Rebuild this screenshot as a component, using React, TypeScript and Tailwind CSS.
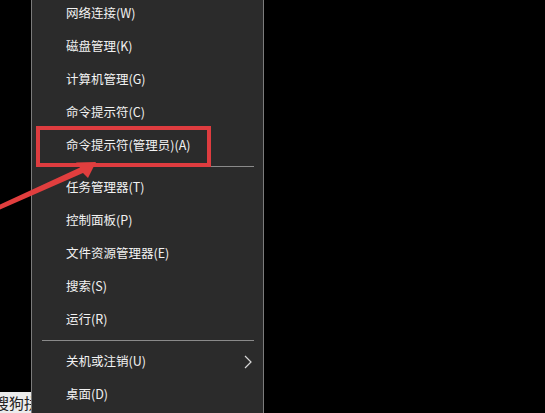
import React from 'react';

type Entry = { label: string; sep?: false; sub?: boolean } | { sep: true };

const entries: Entry[] = [
  { label: '网络连接(W)' },
  { label: '磁盘管理(K)' },
  { label: '计算机管理(G)' },
  { label: '命令提示符(C)' },
  { label: '命令提示符(管理员)(A)' },
  { sep: true },
  { label: '任务管理器(T)' },
  { label: '控制面板(P)' },
  { label: '文件资源管理器(E)' },
  { label: '搜索(S)' },
  { label: '运行(R)' },
  { sep: true },
  { label: '关机或注销(U)', sub: true },
  { label: '桌面(D)' },
];

const font = { fontFamily: '"Microsoft YaHei", "Noto Sans CJK SC", sans-serif' };

export default function App() {
  return (
    <div className="relative w-[545px] h-[413px] overflow-hidden bg-black" style={font}>
      <div className="ml-[31px] w-[233px] h-[430px] bg-[#2b2b2b] border-x border-[#7c7c7c]">
        <div className="flex flex-col -mt-[3px]">
          {entries.map((e, i) =>
            e.sep ? (
              <div key={i} className="h-[9px] flex items-center pl-[10px] pr-[9px]">
                <div className="h-px w-full bg-[#8a8a8a]" />
              </div>
            ) : (
              <div
                key={i}
                className="h-[33px] flex items-center justify-between pl-[34px] pr-[11px] text-[12.5px] text-[#f2f2f2]"
              >
                <span>{e.label}</span>
                {e.sub && (
                  <svg width="8" height="14" viewBox="0 0 8 14" className="text-[#d8d8d8]">
                    <polyline points="1,1 7,7 1,13" fill="none" stroke="currentColor" strokeWidth="1.2" />
                  </svg>
                )}
              </div>
            )
          )}
        </div>
      </div>

      {/* annotation: highlight box */}
      <div className="absolute left-[36px] top-[126px] w-[175px] h-[41px] border-[4px] border-[#de3c3f]" />

      {/* annotation: arrow */}
      <svg className="absolute left-0 top-0" width="545" height="413" viewBox="0 0 545 413">
        <polygon
          points="-3,206 80,167.5 76,162.5 96,162 88,178 83,173 -1,210"
          fill="#e13e3e"
        />
      </svg>

      {/* other window peeking in bottom-left */}
      <div className="absolute left-0 top-[392px] w-[31px] h-[21px] bg-[#ececec] overflow-hidden">
        <div className="-ml-[6px] text-[15px] leading-[21px] text-[#222] whitespace-nowrap">搜狗拼</div>
      </div>
    </div>
  );
}
